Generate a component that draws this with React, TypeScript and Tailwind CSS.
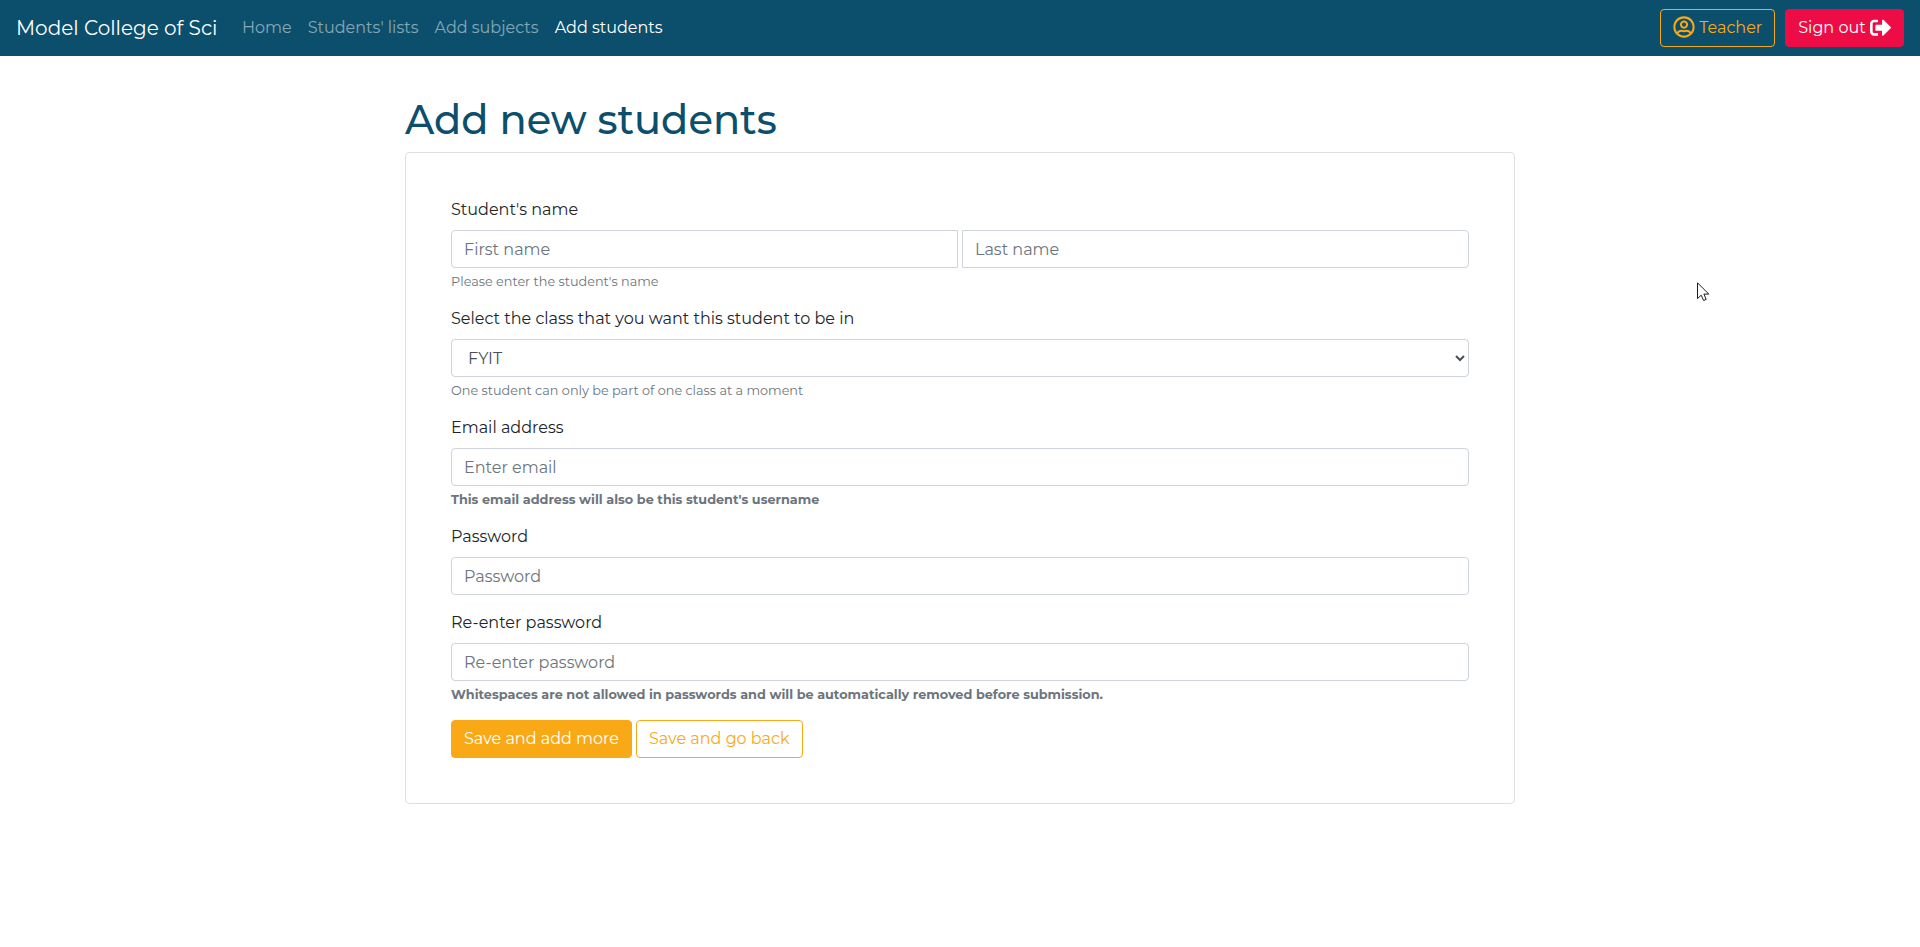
import { FaRegUserCircle, FaSignOutAlt } from "react-icons/fa";

const navLinks = [
  { label: "Home", active: false },
  { label: "Students' lists", active: false },
  { label: "Add subjects", active: false },
  { label: "Add students", active: true },
];

const fieldBase =
  "block h-[38px] border border-[#ced4da] bg-white px-3 py-1.5 text-base text-[#495057] placeholder:text-[#6c757d] placeholder:opacity-100 outline-none";

function Label({ children }: { children: string }) {
  return <label className="mb-2 block text-base text-[#212529]">{children}</label>;
}

function Hint({ children, bold }: { children: string; bold?: boolean }) {
  return (
    <small
      className={`mt-1 block text-[12.8px] leading-[19px] text-[#6c757d] ${bold ? "font-bold" : "font-normal"}`}
    >
      {children}
    </small>
  );
}

function Navbar() {
  return (
    <nav className="flex h-14 items-center bg-[#0c4f6c] px-4">
      <a className="mr-[16.6px] text-xl leading-[30px] text-white">Model College of Sci</a>
      <ul className="flex">
        {navLinks.map((link) => (
          <li key={link.label}>
            <a className={`block p-2 ${link.active ? "text-white" : "text-white/50"}`}>{link.label}</a>
          </li>
        ))}
      </ul>
      <div className="ml-auto flex gap-[10px]">
        <button className="flex h-[38px] items-center gap-1 rounded border border-[#faa916] px-3 text-[#faa916]">
          <FaRegUserCircle className="mb-0.5 size-[22px]" />
          Teacher
        </button>
        <button className="flex h-[38px] items-center gap-1 rounded border border-[#ee0c46] bg-[#ee0c46] px-3 text-white">
          Sign out
          <FaSignOutAlt className="mb-px size-[21.33px]" />
        </button>
      </div>
    </nav>
  );
}

function Pointer() {
  return (
    <svg className="absolute left-[1697px] top-[282px]" width="13" height="20" viewBox="0 0 13 20">
      <path
        d="M0.5 0.8V16.6L4.2 13.2L6.6 18.5L9.2 17.4L6.9 12.1H11.8Z"
        fill="#fff"
        stroke="#1a1a24"
        strokeWidth="1"
      />
    </svg>
  );
}

export default function App() {
  return (
    <div className="relative min-h-[947px] bg-white font-[Montserrat,'Open_Sans',sans-serif] text-base text-[#212529]">
      <Navbar />
      <main className="mx-auto w-[1110px] pt-10">
        <h1 className="mb-2 text-[40px] font-medium leading-[48px] text-[#0c4f6c]">Add new students</h1>
        <form className="rounded border border-black/[0.125] p-[45px]">
          <div className="mb-4">
            <Label>Student's name</Label>
            <div className="flex gap-1">
              <input className={`${fieldBase} min-w-0 flex-1 rounded-l`} placeholder="First name" />
              <input className={`${fieldBase} min-w-0 flex-1 rounded-r`} placeholder="Last name" />
            </div>
            <Hint>Please enter the student's name</Hint>
          </div>
          <div className="mb-4">
            <Label>Select the class that you want this student to be in</Label>
            <select className={`${fieldBase} w-full rounded`}>
              <option>FYIT</option>
            </select>
            <Hint>One student can only be part of one class at a moment</Hint>
          </div>
          <div className="mb-4">
            <Label>Email address</Label>
            <input type="email" className={`${fieldBase} w-full rounded`} placeholder="Enter email" />
            <Hint bold>This email address will also be this student's username</Hint>
          </div>
          <div className="mb-4">
            <Label>Password</Label>
            <input type="password" className={`${fieldBase} w-full rounded`} placeholder="Password" />
          </div>
          <div className="mb-4">
            <Label>Re-enter password</Label>
            <input type="password" className={`${fieldBase} w-full rounded`} placeholder="Re-enter password" />
            <Hint bold>
              Whitespaces are not allowed in passwords and will be automatically removed before submission.
            </Hint>
          </div>
          <div className="flex gap-1">
            <button
              type="button"
              className="h-[38px] rounded border border-[#faa916] bg-[#faa916] px-3 leading-6 text-white"
            >
              Save and add more
            </button>
            <button type="button" className="h-[38px] rounded border border-[#faa916] px-3 leading-6 text-[#faa916]">
              Save and go back
            </button>
          </div>
        </form>
      </main>
      <Pointer />
    </div>
  );
}
